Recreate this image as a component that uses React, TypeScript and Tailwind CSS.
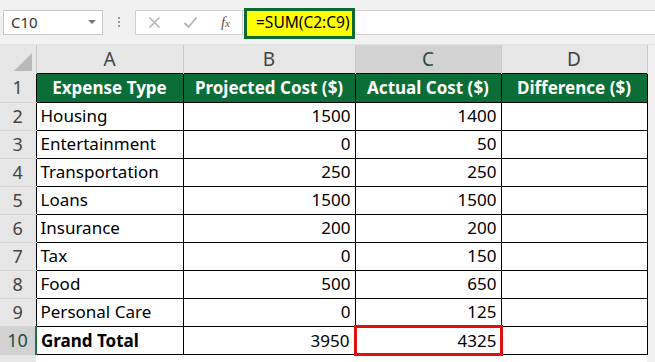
import React from 'react';

const rows = [
  { n: 2, type: 'Housing', proj: '1500', act: '1400' },
  { n: 3, type: 'Entertainment', proj: '0', act: '50' },
  { n: 4, type: 'Transportation', proj: '250', act: '250' },
  { n: 5, type: 'Loans', proj: '1500', act: '1500' },
  { n: 6, type: 'Insurance', proj: '200', act: '200' },
  { n: 7, type: 'Tax', proj: '0', act: '150' },
  { n: 8, type: 'Food', proj: '500', act: '650' },
  { n: 9, type: 'Personal Care', proj: '0', act: '125' },
];

const font = { fontFamily: '"Noto Sans", "Open Sans", sans-serif' };

export default function App() {
  return (
    <div className="w-[655px] h-[362px] overflow-hidden bg-white text-black" style={font}>
      {/* --- FORMULA BAR --- */}
      <div className="h-[45px] bg-[#f1f1f1] flex items-center pl-[3px] border-b border-[#e2e2e2]">
        <div className="w-[100px] h-[25px] bg-white border border-[#c8c8c8] flex items-center justify-between pl-[7px] pr-[6px] text-[15px] text-[#333]">
          <span>C10</span>
          <span className="w-0 h-0 border-l-[4px] border-r-[4px] border-t-[4px] border-l-transparent border-r-transparent border-t-[#777]" />
        </div>
        <div className="w-[32px] flex flex-col items-center justify-center gap-[2px]">
          <span className="w-[2px] h-[2px] bg-[#999]" />
          <span className="w-[2px] h-[2px] bg-[#999]" />
          <span className="w-[2px] h-[2px] bg-[#999]" />
        </div>
        <div className="w-[108px] h-[25px] bg-white border border-[#d0d0d0] flex items-center justify-between pl-[12px] pr-[12px]">
          <svg width="13" height="13" viewBox="0 0 13 13">
            <path d="M1.5 1.5 L11.5 11.5 M11.5 1.5 L1.5 11.5" stroke="#b4b4b4" strokeWidth="1.6" />
          </svg>
          <svg width="15" height="13" viewBox="0 0 15 13">
            <path d="M1.5 7 L5.5 11 L13.5 1.5" stroke="#b4b4b4" strokeWidth="1.8" fill="none" />
          </svg>
          <span className="italic text-[15px] text-[#555] leading-none" style={{ fontFamily: '"Liberation Serif", serif' }}>
            f<span className="text-[11px]">x</span>
          </span>
        </div>
        <div className="flex-1 h-[25px] bg-white border-y border-[#d0d0d0] flex items-center relative">
          <div className="absolute left-[1px] top-[-3px] w-[111px] h-[31px] bg-[#ffff00] border-[3px] border-[#0e6a32] flex items-center pl-[9px] text-[15.5px]">
            =SUM(C2:C9)
          </div>
        </div>
      </div>

      {/* --- SHEET --- */}
      <div className="bg-[#f1f1f1] flex">
        <table className="border-collapse table-fixed text-[17px]">
          <colgroup>
            <col className="w-[36px]" />
            <col className="w-[147px]" />
            <col className="w-[172px]" />
            <col className="w-[146px]" />
            <col className="w-[146px]" />
          </colgroup>
          <thead>
            <tr className="h-[28px] text-[#444] text-[19px] leading-[22px]">
              <th className="bg-[#e6e6e6] border-r border-[#c8c8c8] p-0 align-bottom">
                <div className="flex justify-end pr-[3px] pb-[1px]">
                  <svg width="20" height="20" viewBox="0 0 20 20">
                    <path d="M19 1 L19 19 L1 19 Z" fill="#b9b9b9" />
                  </svg>
                </div>
              </th>
              <th className="bg-[#e6e6e6] border-r border-[#c8c8c8] font-normal">A</th>
              <th className="bg-[#e6e6e6] border-r border-[#c8c8c8] font-normal">B</th>
              <th className="bg-[#d2d2d2] border-r border-[#c8c8c8] font-normal text-[#26503a]">C</th>
              <th className="bg-[#e6e6e6] border-r border-[#c8c8c8] font-normal">D</th>
            </tr>
          </thead>
          <tbody>
            <tr className="h-[29px]">
              <td className="bg-[#e6e6e6] text-[#444] text-center text-[18px] border-b border-[#d4d4d4]">1</td>
              <td className="bg-[#0b6e38] text-white font-bold text-center border border-black">Expense Type</td>
              <td className="bg-[#0b6e38] text-white font-bold text-center border border-black">Projected Cost ($)</td>
              <td className="bg-[#0b6e38] text-white font-bold text-center border border-black">Actual Cost ($)</td>
              <td className="bg-[#0b6e38] text-white font-bold text-center border border-black">Difference ($)</td>
            </tr>
            {rows.map((r) => (
              <tr key={r.n} className="h-[28px]">
                <td className="bg-[#e6e6e6] text-[#444] text-center text-[18px] border-b border-[#d4d4d4]">{r.n}</td>
                <td className="bg-white border border-black pl-[4px] whitespace-nowrap">{r.type}</td>
                <td className="bg-white border border-black text-right pr-[4px]">{r.proj}</td>
                <td className="bg-white border border-black text-right pr-[4px]">{r.act}</td>
                <td className="bg-white border border-black" />
              </tr>
            ))}
            <tr className="h-[28px]">
              <td className="bg-[#d2d2d2] text-[#26503a] text-center text-[18px] border-r-2 border-r-[#217346]">10</td>
              <td className="bg-white border border-black pl-[4px] font-bold">Grand Total</td>
              <td className="bg-white border border-black text-right pr-[4px]">3950</td>
              <td className="bg-white border-[3px] border-[#e01010] text-right pr-[3px]">4325</td>
              <td className="bg-white border border-black" />
            </tr>
            <tr className="h-[10px]">
              <td className="bg-[#e6e6e6]" />
              <td className="bg-white" colSpan={4} />
            </tr>
          </tbody>
        </table>
      </div>
    </div>
  );
}
